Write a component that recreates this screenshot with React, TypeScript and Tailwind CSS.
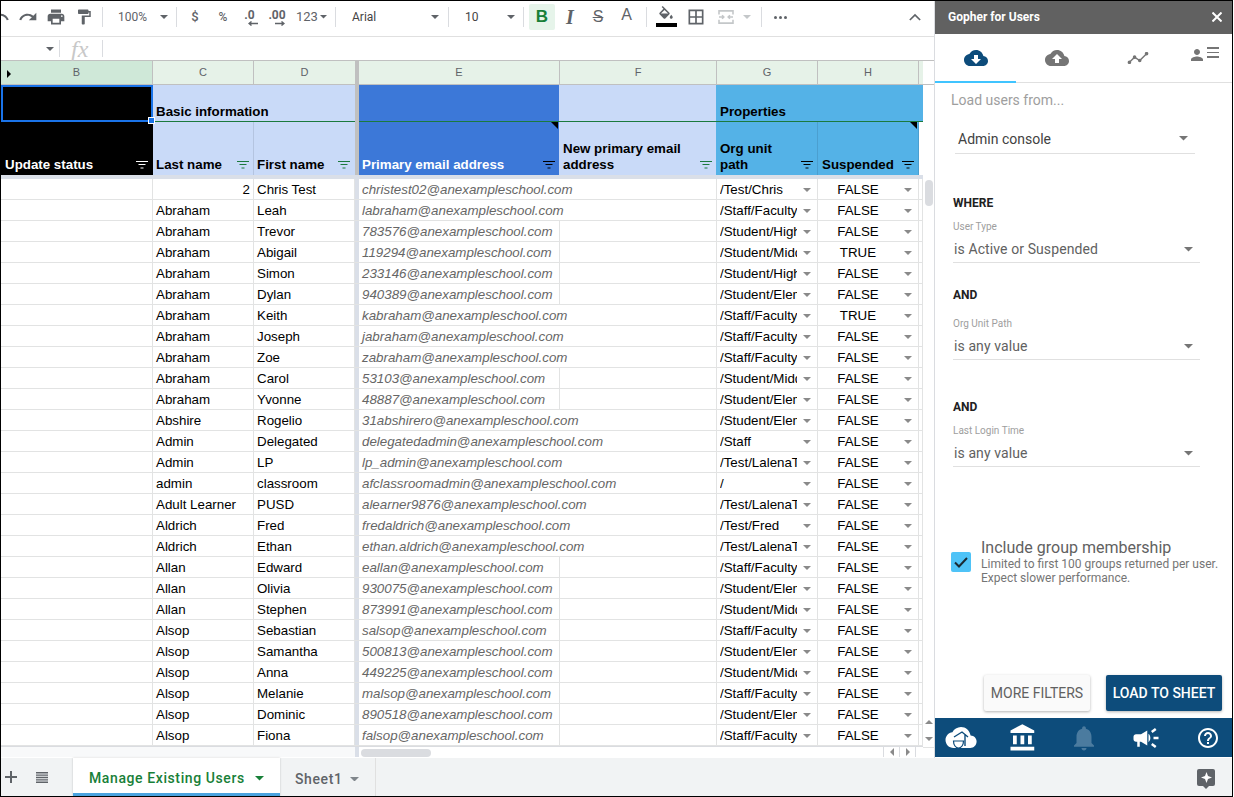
import React from "react";

type IP = { d: string; className?: string; size?: number };
const I = ({ d, className = "", size = 24 }: IP) => (
  <svg width={size} height={size} viewBox="0 0 24 24" fill="currentColor" className={className}>
    <path d={d} />
  </svg>
);

const P = {
  undo: "M12.5 8c-2.65 0-5.05.99-6.9 2.6L2 7v9h9l-3.62-3.62c1.39-1.16 3.16-1.88 5.12-1.88 3.54 0 6.55 2.31 7.6 5.5l2.37-.78C21.08 11.03 17.15 8 12.5 8z",
  redo: "M18.4 10.6C16.55 8.99 14.15 8 11.5 8c-4.65 0-8.58 3.03-9.96 7.22L3.9 16c1.05-3.19 4.05-5.5 7.6-5.5 1.95 0 3.73.72 5.12 1.88L13 16h9V7l-3.6 3.6z",
  print: "M19 8H5c-1.66 0-3 1.34-3 3v6h4v4h12v-4h4v-6c0-1.66-1.34-3-3-3zm-3 11H8v-5h8v5zm3-7c-.55 0-1-.45-1-1s.45-1 1-1 1 .45 1 1-.45 1-1 1zm-1-9H6v4h12V3z",
  paint: "M18 4V3c0-.55-.45-1-1-1H5c-.55 0-1 .45-1 1v4c0 .55.45 1 1 1h12c.55 0 1-.45 1-1V6h1v4H9v11c0 .55.45 1 1 1h2c.55 0 1-.45 1-1v-9h8V4h-3z",
  fill: "M16.56 8.94L7.62 0 6.21 1.41l2.38 2.38-5.15 5.15c-.59.59-.59 1.54 0 2.12l5.5 5.5c.29.29.68.44 1.06.44s.77-.15 1.06-.44l5.5-5.5c.59-.58.59-1.53 0-2.12zM5.21 10L10 5.21 14.79 10H5.21zM19 11.5s-2 2.17-2 3.5c0 1.1.9 2 2 2s2-.9 2-2c0-1.33-2-3.5-2-3.5z",
  borders: "M3 3v18h18V3H3zm8 16H5v-6h6v6zm0-8H5V5h6v6zm8 8h-6v-6h6v6zm0-8h-6V5h6v6z",
  down: "M19.35 10.04C18.67 6.59 15.64 4 12 4 9.11 4 6.6 5.64 5.35 8.04 2.34 8.36 0 10.91 0 14c0 3.31 2.69 6 6 6h13c2.76 0 5-2.24 5-5 0-2.64-2.05-4.78-4.65-4.96zM17 13l-5 5-5-5h3V9h4v4h3z",
  up: "M19.35 10.04C18.67 6.59 15.64 4 12 4 9.11 4 6.6 5.64 5.35 8.04 2.34 8.36 0 10.91 0 14c0 3.31 2.69 6 6 6h13c2.76 0 5-2.24 5-5 0-2.64-2.05-4.78-4.65-4.96zM14 13v4h-4v-4H7l5-5 5 5h-3z",
  person: "M12 12c2.21 0 4-1.79 4-4s-1.79-4-4-4-4 1.79-4 4 1.79 4 4 4zm0 2c-2.67 0-8 1.34-8 4v2h16v-2c0-2.66-5.33-4-8-4z",
  bank: "M4 10v7h3v-7H4zm6 0v7h3v-7h-3zM2 22h19v-3H2v3zm14-12v7h3v-7h-3zm-4.5-9L2 6v2h19V6l-9.5-5z",
  bell: "M12 22c1.1 0 2-.9 2-2h-4c0 1.1.89 2 2 2zm6-6v-5c0-3.07-1.64-5.64-4.5-6.32V4c0-.83-.67-1.5-1.5-1.5s-1.5.67-1.5 1.5v.68C7.63 5.36 6 7.92 6 11v5l-2 2v1h16v-1l-2-2z",
  horn: "M18 11v2h4v-2h-4zm-2 6.61c.96.71 2.21 1.65 3.2 2.39.4-.53.8-1.07 1.2-1.6-.99-.74-2.24-1.68-3.2-2.4-.4.54-.8 1.08-1.2 1.61zM20.4 5.6c-.4-.53-.8-1.07-1.2-1.6-.99.74-2.24 1.68-3.2 2.4.4.53.8 1.07 1.2 1.6.96-.72 2.21-1.65 3.2-2.4zM4 9c-1.1 0-2 .9-2 2v2c0 1.1.9 2 2 2h1v4h2v-4h1l5 3V6L8 9H4zm11.5 3c0-1.33-.58-2.53-1.5-3.35v6.69c.92-.81 1.5-2.01 1.5-3.34z",
  help: "M11 18h2v-2h-2v2zm1-16C6.48 2 2 6.48 2 12s4.48 10 10 10 10-4.48 10-10S17.52 2 12 2zm0 18c-4.41 0-8-3.59-8-8s3.59-8 8-8 8 3.59 8 8-3.59 8-8 8zm0-14c-2.21 0-4 1.79-4 4h2c0-1.1.9-2 2-2s2 .9 2 2c0 2-3 1.75-3 5h2c0-2.25 3-2.5 3-5 0-2.21-1.79-4-4-4z",
};

const Caret = ({ className = "text-[#5f6368]", w = 8 }: { className?: string; w?: number }) => (
  <svg width={w} height={w / 2} viewBox="0 0 10 5" className={className} fill="currentColor">
    <path d="M0 0h10L5 5z" />
  </svg>
);

const Divider = () => <div className="w-px h-[20px] bg-[#dadce0] shrink-0" />;

const Toolbar = () => (
  <div className="h-[36px] shrink-0 flex items-center pb-[3px] border-b border-[#e0e0e0] text-[#5f6368] font-['Roboto',sans-serif] overflow-hidden bg-white">
    <div className="w-[13px] shrink-0 flex justify-end overflow-hidden">
      <I d={P.undo} size={20} className="shrink-0 mr-[4px]" />
    </div>
    <div className="w-[28px] shrink-0 flex justify-center"><I d={P.redo} size={20} /></div>
    <div className="w-[28px] shrink-0 flex justify-center"><I d={P.print} size={20} /></div>
    <div className="w-[28px] shrink-0 flex justify-center"><I d={P.paint} size={18} /></div>
    <div className="w-[4px] shrink-0" />
    <Divider />
    <div className="w-[52px] shrink-0 pl-[15px] text-[12px]">100%</div>
    <div className="w-[18px] shrink-0 flex justify-center"><Caret /></div>
    <div className="w-[3px] shrink-0" />
    <Divider />
    <div className="w-[4px] shrink-0" />
    <div className="w-[28px] shrink-0 text-center text-[13px] font-medium">$</div>
    <div className="w-[28px] shrink-0 text-center text-[12px] font-medium">%</div>
    <div className="w-[25px] shrink-0 flex flex-col items-center mt-[1px]">
      <span className="text-[12px] font-bold leading-[12px]">.0</span>
      <svg width="10" height="5" viewBox="0 0 10 5" className="ml-[6px]"><path d="M10 2.5H2M3.5 0.5L1 2.5l2.5 2" stroke="currentColor" strokeWidth="1.4" fill="none" /></svg>
    </div>
    <div className="w-[30px] shrink-0 flex flex-col items-center mt-[1px]">
      <span className="text-[12px] font-bold leading-[12px]">.00</span>
      <svg width="10" height="5" viewBox="0 0 10 5" className="ml-[6px]"><path d="M0 2.5h8M6.5 0.5L9 2.5l-2.5 2" stroke="currentColor" strokeWidth="1.4" fill="none" /></svg>
    </div>
    <div className="w-[43px] shrink-0 pl-[4px] flex items-center gap-[2px] text-[13px]">
      <span>123</span><Caret w={7} />
    </div>
    <Divider />
    <div className="w-[94px] shrink-0 pl-[16px] text-[12px] text-[#444]">Arial</div>
    <div className="w-[10px] shrink-0 flex justify-center"><Caret /></div>
    <div className="w-[8px] shrink-0" />
    <Divider />
    <div className="w-[57px] shrink-0 pl-[16px] text-[12px] text-[#444]">10</div>
    <div className="w-[10px] shrink-0 flex justify-center"><Caret /></div>
    <div className="w-[7px] shrink-0" />
    <Divider />
    <div className="w-[5px] shrink-0" />
    <div className="w-[26px] h-[26px] shrink-0 flex items-center justify-center rounded-[2px] bg-[#e6f4ea] text-[#188038] font-['Liberation_Sans',sans-serif] font-bold text-[17px]">B</div>
    <div className="w-[1px] shrink-0" />
    <div className="w-[28px] shrink-0 text-center font-['Liberation_Serif',serif] italic font-bold text-[20px] leading-[20px]">I</div>
    <div className="w-[28px] shrink-0 text-center font-['Liberation_Sans',sans-serif] line-through text-[16px]">S</div>
    <div className="w-[28px] shrink-0 text-center pl-[1px] font-['Liberation_Sans',sans-serif] text-[16px] -mt-[4px]">A</div>
    <div className="w-[6px] shrink-0" />
    <Divider />
    <div className="w-[5px] shrink-0" />
    <div className="w-[28px] shrink-0 flex flex-col items-center -mt-[2px]">
      <I d={P.fill} size={18} className="-mb-[1px]" />
      <div className="w-[21px] h-[4px] bg-black" />
    </div>
    <div className="w-[2px] shrink-0" />
    <div className="w-[28px] shrink-0 flex justify-center"><I d={P.borders} size={20} /></div>
    <div className="w-[2px] shrink-0" />
    <div className="w-[28px] shrink-0 flex justify-center text-[#c4c7c9]">
      <svg width="16" height="14" viewBox="0 0 18 16" fill="none" stroke="currentColor" strokeWidth="1.8">
        <path d="M1 5V1h16v4M1 11v4h16v-4M1 8h5M17 8h-5M4.5 6 6.5 8l-2 2M13.5 6l-2 2 2 2" />
      </svg>
    </div>
    <div className="w-[14px] shrink-0 flex justify-center"><Caret className="text-[#c4c7c9]" /></div>
    <div className="w-[7px] shrink-0" />
    <Divider />
    <div className="w-[4px] shrink-0" />
    <div className="w-[28px] shrink-0 flex justify-center gap-[2px]">
      <span className="w-[3px] h-[3px] rounded-full bg-[#5f6368]" />
      <span className="w-[3px] h-[3px] rounded-full bg-[#5f6368]" />
      <span className="w-[3px] h-[3px] rounded-full bg-[#5f6368]" />
    </div>
    <div className="flex-1" />
    <div className="w-[20px] shrink-0 mr-[9px] flex justify-center">
      <svg width="12" height="8" viewBox="0 0 14 9" fill="none" stroke="currentColor" strokeWidth="2"><path d="M1 8l6-6 6 6" /></svg>
    </div>
  </div>
);

const FormulaBar = () => (
  <div className="h-[24px] shrink-0 flex items-center border-b border-[#c0c0c0] bg-white">
    <div className="w-[58px] shrink-0 flex justify-end pr-[5px]"><Caret className="text-[#5f6368]" w={8} /></div>
    <div className="w-px h-[17px] bg-[#dadce0]" />
    <div className="w-[42px] shrink-0 pl-[11px] font-['Liberation_Serif',serif] italic text-[24px] text-[#c8c8c8] leading-none">fx</div>
    <div className="w-px h-[17px] bg-[#dadce0]" />
  </div>
);

const Letter = ({ w, t, sel }: { w: string; t: string; sel?: boolean }) => (
  <div className={`${w} shrink-0 h-full flex items-center justify-center border-r border-[#c0c0c0] text-[11px] text-[#5f6368] font-['Liberation_Sans',sans-serif] ${sel ? "bg-[#cfe8d8] relative" : "bg-[#e6f2e8]"}`}>
    {sel && <span className="absolute left-[6px] top-[9px] w-0 h-0 border-y-[4px] border-y-transparent border-l-[4px] border-l-black" />}
    {t}
  </div>
);

const ColumnHeader = () => (
  <div className="h-[24px] shrink-0 flex border-b border-[#c0c0c0]">
    <Letter w="w-[152px]" t="B" sel />
    <Letter w="w-[101px]" t="C" />
    <div className="w-[101px] shrink-0 h-full flex items-center justify-center bg-[#e6f2e8] text-[11px] text-[#5f6368] font-['Liberation_Sans',sans-serif]">D</div>
    <div className="w-[4px] shrink-0 bg-[#c0c0c0]" />
    <Letter w="w-[201px]" t="E" />
    <Letter w="w-[157px]" t="F" />
    <Letter w="w-[101px]" t="G" />
    <Letter w="w-[101px]" t="H" />
    <div className="w-[4px] shrink-0 bg-[#e6f2e8]" />
  </div>
);

const Filter = ({ className }: { className: string }) => (
  <svg width="12" height="8" viewBox="0 0 12 8" className={`${className} shrink-0`} stroke="currentColor" strokeWidth="1" fill="none">
    <path d="M0 .5h12M2.5 3.5h7M4.5 7h3" />
  </svg>
);

const Corner = () => (
  <span className="absolute right-[1px] top-0 w-0 h-0 border-t-[7px] border-t-black border-l-[7px] border-l-transparent" />
);

const HeadCell = ({ w, bg, text, filter, border, corner, lines, pad = "pl-[3px]" }: { w: string; bg: string; text: string; filter: string; border: string; corner?: boolean; lines?: string[]; pad?: string }) => (
  <div className={`${w} ${bg} ${border} ${text} ${pad} shrink-0 relative border-r flex items-end pr-[4px] pb-[2px] font-bold text-[13.33px] leading-[16px]`}>
    {corner && <Corner />}
    <div className="flex-1 whitespace-nowrap">{lines?.map((l) => <div key={l}>{l}</div>)}</div>
    <Filter className={`${filter} mb-[4px]`} />
  </div>
);

const FrozenHeader = () => (
  <div className="shrink-0 font-['Liberation_Sans',sans-serif]">
    <div className="h-[37px] flex">
      <div className="w-[152px] shrink-0 bg-black border-2 border-[#1a73e8] relative">
        <span className="absolute -right-[4px] -bottom-[4px] w-[7px] h-[7px] bg-[#1a73e8] border border-white z-10" />
      </div>
      <div className="w-[202px] shrink-0 bg-[#c9daf8] border-b border-[#1b7a3e] flex items-end pl-[3px] pb-[1px] font-bold text-[13.33px] leading-[16px]">Basic information</div>
      <div className="w-[4px] shrink-0 bg-[#c0c0c0]" />
      <div className="w-[200px] shrink-0 bg-[#3c78d8] border-b border-[#1b7a3e]" />
      <div className="w-[157px] shrink-0 bg-[#c9daf8] border-b border-[#1b7a3e]" />
      <div className="w-[207px] shrink-0 bg-[#54b2e7] border-b border-[#1b7a3e] flex items-end pl-[4px] pb-[1px] font-bold text-[13.33px] leading-[16px]">Properties</div>
    </div>
    <div className="h-[53px] flex">
      <HeadCell w="w-[152px]" bg="bg-black" border="border-black" text="text-white" filter="text-white" pad="pl-[4px]" lines={["Update status"]} />
      <HeadCell w="w-[101px]" bg="bg-[#c9daf8]" border="border-[#b4c4e0]" text="text-black" filter="text-[#1b7a3e]" lines={["Last name"]} />
      <HeadCell w="w-[101px]" bg="bg-[#c9daf8]" border="border-[#c9daf8]" text="text-black" filter="text-[#1b7a3e]" lines={["First name"]} />
      <div className="w-[4px] shrink-0 bg-[#c0c0c0]" />
      <HeadCell w="w-[201px]" bg="bg-[#3c78d8]" border="border-[#c9daf8]" text="text-white" filter="text-black" corner lines={["Primary email address"]} />
      <HeadCell w="w-[157px]" bg="bg-[#c9daf8]" border="border-[#54b2e7]" text="text-black" filter="text-[#1b7a3e]" lines={["New primary email", "address"]} />
      <HeadCell w="w-[101px]" bg="bg-[#54b2e7]" border="border-[#4b9fd0]" text="text-black" filter="text-black" lines={["Org unit", "path"]} />
      <HeadCell w="w-[101px]" bg="bg-[#54b2e7]" border="border-[#4b9fd0]" text="text-black" filter="text-black" corner pad="pl-[4px]" lines={["Suspended"]} />
      <div className="w-[4px] shrink-0 bg-white" />
    </div>
    <div className="h-[4px] bg-[#dadfe8]" />
  </div>
);

type Row = [string, string, string, string, string?, boolean?];
const D = "@anexampleschool.com";
const rows: Row[] = [
  ["2", "Chris Test", "christest02", "/Test/Chris", "FALSE", true],
  ["Abraham", "Leah", "labraham", "/Staff/Faculty", "FALSE", true],
  ["Abraham", "Trevor", "783576", "/Student/High", "FALSE"],
  ["Abraham", "Abigail", "119294", "/Student/Middle", "TRUE"],
  ["Abraham", "Simon", "233146", "/Student/High", "FALSE"],
  ["Abraham", "Dylan", "940389", "/Student/Elem", "FALSE"],
  ["Abraham", "Keith", "kabraham", "/Staff/Faculty", "TRUE", true],
  ["Abraham", "Joseph", "jabraham", "/Staff/Faculty", "FALSE", true],
  ["Abraham", "Zoe", "zabraham", "/Staff/Faculty", "FALSE", true],
  ["Abraham", "Carol", "53103", "/Student/Middle", "FALSE"],
  ["Abraham", "Yvonne", "48887", "/Student/Elem", "FALSE"],
  ["Abshire", "Rogelio", "31abshirero", "/Student/Elem", "FALSE", true],
  ["Admin", "Delegated", "delegatedadmin", "/Staff", "FALSE", true],
  ["Admin", "LP", "lp_admin", "/Test/LalenaT", "FALSE", true],
  ["admin", "classroom", "afclassroomadmin", "/", "FALSE", true],
  ["Adult Learner", "PUSD", "alearner9876", "/Test/LalenaT", "FALSE", true],
  ["Aldrich", "Fred", "fredaldrich", "/Test/Fred", "FALSE", true],
  ["Aldrich", "Ethan", "ethan.aldrich", "/Test/LalenaT", "FALSE", true],
  ["Allan", "Edward", "eallan", "/Staff/Faculty", "FALSE"],
  ["Allan", "Olivia", "930075", "/Student/Elem", "FALSE"],
  ["Allan", "Stephen", "873991", "/Student/Middle", "FALSE"],
  ["Alsop", "Sebastian", "salsop", "/Staff/Faculty", "FALSE"],
  ["Alsop", "Samantha", "500813", "/Student/Elem", "FALSE"],
  ["Alsop", "Anna", "449225", "/Student/Middle", "FALSE"],
  ["Alsop", "Melanie", "malsop", "/Staff/Faculty", "FALSE"],
  ["Alsop", "Dominic", "890518", "/Student/Elem", "FALSE"],
  ["Alsop", "Fiona", "falsop", "/Staff/Faculty", "FALSE"],
];

const cell = "shrink-0 h-full pt-[2px] border-r border-[#e2e3e3] flex items-center whitespace-nowrap";

const DataRow = ({ r, i }: { r: Row; i: number }) => (
  <div className="h-[21px] flex border-b border-[#e2e3e3] text-[13.33px] text-black font-['Liberation_Sans',sans-serif]">
    <div className={`${cell} w-[152px]`} />
    <div className={`${cell} w-[101px] px-[3px] ${i === 0 ? "justify-end" : ""}`}>{r[0]}</div>
    <div className={`${cell} w-[101px] px-[3px]`}>{r[1]}</div>
    <div className="w-[4px] shrink-0 bg-[#dadfe8]" />
    <div className={`${cell} w-[201px] px-[3px] italic text-[#666666] ${r[5] ? "border-r-transparent" : ""}`}>{r[2] + D}</div>
    <div className={`${cell} w-[157px]`} />
    <div className={`${cell} w-[101px] pl-[3px]`}>
      <div className="w-[77px] overflow-hidden">{r[3]}</div>
      <Caret className="text-[#8a8a8a] ml-[6px]" w={8} />
    </div>
    <div className={`${cell} w-[101px]`}>
      <div className="w-[80px] text-center">{r[4]}</div>
      <Caret className="text-[#8a8a8a] ml-[6px]" w={8} />
    </div>
    <div className="w-[4px] shrink-0 border-r border-[#e2e3e3]" />
  </div>
);

const ScrollCol = () => (
  <div className="w-[11px] shrink-0 bg-white flex flex-col">
    <div className="h-[24px] bg-white border-b border-[#c0c0c0]" />
    <div className="flex-1 pt-[95px] pl-[2px]">
      <div className="w-[8px] h-[26px] rounded-[4px] bg-[#dadce0]" />
    </div>
    <div className="h-[17px] flex items-center justify-center"><Caret className="text-[#8a8a8a] rotate-180" w={8} /></div>
    <div className="h-[17px] flex items-center justify-center"><Caret className="text-[#8a8a8a]" w={8} /></div>
    <div className="h-[11px] border-t border-[#e2e3e3]" />
  </div>
);

const HScroll = () => (
  <div className="h-[11px] shrink-0 flex border-t border-[#dadce0] bg-white">
    <div className="w-[354px] shrink-0 bg-[#f8f9fa]" />
    <div className="w-[4px] shrink-0 bg-[#dadfe8]" />
    <div className="flex-1 pl-[2px] pt-[2px]">
      <div className="w-[70px] h-[8px] rounded-[4px] bg-[#dadce0]" />
    </div>
    <div className="w-[16px] border-l border-[#dadce0] flex items-center justify-center">
      <span className="w-0 h-0 border-y-[4px] border-y-transparent border-r-[4px] border-r-[#8a8a8a]" />
    </div>
    <div className="w-[16px] border-l border-[#dadce0] flex items-center justify-center">
      <span className="w-0 h-0 border-y-[4px] border-y-transparent border-l-[4px] border-l-[#8a8a8a]" />
    </div>
    <div className="w-[8px] border-l border-[#dadce0]" />
  </div>
);

const Select = ({ label, value, w, color }: { label?: string; value: string; w: string; color: string }) => (
  <div className={`${w}`}>
    {label && <div className="text-[10px] leading-[12px] text-[#9e9e9e]">{label}</div>}
    <div className={`mt-[4px] h-[26px] flex items-center justify-between border-b border-[#e0e0e0] text-[14px] tracking-[0.1px] ${color}`}>
      <span className="pl-[1px]">{value}</span>
      <Caret className="text-[#757575] mr-[7px]" w={9} />
    </div>
  </div>
);

const Panel = () => (
  <div className="w-[298px] shrink-0 flex flex-col border-l border-[#dadce0] bg-white font-['Roboto',sans-serif]">
    <div className="h-[33px] shrink-0 bg-[#616161] flex items-center justify-between pl-[13px] pr-[10px] pb-[2px] text-white">
      <span className="text-[12px] font-bold">Gopher for Users</span>
      <svg width="10" height="10" viewBox="0 0 10 10" stroke="currentColor" strokeWidth="2"><path d="M0.5 0.5l9 9M9.5 0.5l-9 9" /></svg>
    </div>
    <div className="h-[49px] shrink-0 flex border-b border-[#e0e0e0]">
      <div className="w-[81px] h-[49px] border-b-[2px] border-[#40c4ff] flex items-center justify-center text-[#0d4c7b]"><I d={P.down} size={24} /></div>
      <div className="w-[81px] flex items-center justify-center text-[#757575]"><I d={P.up} size={24} /></div>
      <div className="w-[81px] flex items-center justify-center text-[#757575]">
        <svg width="22" height="12" viewBox="0 0 24 14" fill="currentColor" stroke="currentColor" strokeWidth="1.6">
          <path d="M2 12l6-6 6 4 8-8" fill="none" />
          <circle cx="2" cy="12" r="1.3" /><circle cx="8" cy="6" r="1.3" /><circle cx="14" cy="10" r="1.3" /><circle cx="22" cy="2" r="1.3" />
        </svg>
      </div>
      <div className="flex-1 flex items-start justify-center pt-[12px] text-[#757575] gap-[1px] pr-[4px]">
        <I d={P.person} size={18} />
        <div className="flex flex-col gap-[3px] mt-[1px]">
          <span className="w-[12px] h-[1.5px] bg-[#757575]" />
          <span className="w-[12px] h-[1.5px] bg-[#757575]" />
          <span className="w-[12px] h-[1.5px] bg-[#757575]" />
        </div>
      </div>
    </div>
    <div className="flex-1 flex flex-col pl-[15px] pr-[8px]">
      <div className="pt-[8px] pl-[1px] text-[14px] leading-[18px] text-[#9e9e9e]">Load users from...</div>
      <div className="pl-[5px] pr-[29px] mt-[15px]">
        <div className="h-[30px] flex items-center justify-between border-b border-[#e0e0e0] text-[14px] text-[#424242]">
          <span className="pl-[3px] pt-[2px]">Admin console</span>
          <Caret className="text-[#757575] mr-[7px]" w={9} />
        </div>
      </div>
      <div className="mt-[42px] pl-[3px] text-[12px] leading-[14px] font-bold text-[#212121]">WHERE</div>
      <div className="mt-[11px] pl-[3px]"><Select label="User Type" value="is Active or Suspended" w="w-[247px]" color="text-[#616161]" /></div>
      <div className="mt-[25px] pl-[3px] text-[12px] leading-[14px] font-bold text-[#212121]">AND</div>
      <div className="mt-[16px] pl-[3px]"><Select label="Org Unit Path" value="is any value" w="w-[247px]" color="text-[#616161]" /></div>
      <div className="mt-[40px] pl-[3px] text-[12px] leading-[14px] font-bold text-[#212121]">AND</div>
      <div className="mt-[11px] pl-[3px]"><Select label="Last Login Time" value="is any value" w="w-[247px]" color="text-[#616161]" /></div>
      <div className="mt-[72px] flex items-center gap-[10px] pl-[1px]">
        <div className="w-[20px] h-[20px] shrink-0 rounded-[2px] bg-[#4fc3f7] flex items-center justify-center">
          <svg width="14" height="11" viewBox="0 0 14 11" fill="none" stroke="#1a2a33" strokeWidth="2"><path d="M1 5.5l4 4 8-8.5" /></svg>
        </div>
        <div className="text-[#757575]">
          <div className="text-[16px] leading-[18px] text-[#616161]">Include group membership</div>
          <div className="text-[12px] leading-[14px] whitespace-nowrap">Limited to first 100 groups returned per user.</div>
          <div className="text-[12px] leading-[14px]">Expect slower performance.</div>
        </div>
      </div>
      <div className="flex-1" />
      <div className="flex justify-end gap-[16px] pr-[2px] mb-[7px]">
        <div className="w-[106px] h-[36px] flex items-center justify-center rounded-[2px] bg-[#fafafa] text-[14px] text-[#616161] shadow-[0_1px_3px_rgba(0,0,0,0.3)]">MORE FILTERS</div>
        <div className="w-[116px] h-[36px] flex items-center justify-center rounded-[2px] bg-[#0d4c7b] text-[14px] font-medium text-white shadow-[0_1px_3px_rgba(0,0,0,0.3)]">LOAD TO SHEET</div>
      </div>
    </div>
    <div className="h-[39px] mb-[1px] shrink-0 bg-[#0d4c7b] flex items-center text-white overflow-hidden">
      <div className="w-[56px] shrink-0 flex justify-center pr-[4px]">
        <svg width="32" height="28" viewBox="0 0 32 28">
          <path fill="#fff" d="M25.6 11.5C24.6 6.4 20.7 3 16 3c-3.7 0-7 2.1-8.6 5.2C3.5 8.6.5 11.9.5 16c0 4.4 3.6 8 8 8h16.7c3.6 0 6.4-2.9 6.4-6.5 0-3.4-2.6-5.8-6-6z" />
          <path stroke="#0d4c7b" strokeWidth="1.4" fill="none" d="M9 13l8-5 6 5M20 10v12" />
          <path fill="#fff" stroke="#0d4c7b" strokeWidth="1.2" d="M8.5 17h10c0 4-2.2 7-5 7s-5-3-5-7z" />
          <circle cx="13.5" cy="14.5" r="1" fill="#fff" />
        </svg>
      </div>
      <div className="w-[62px] shrink-0 flex justify-center pl-[1px]"><I d={P.bank} size={30} /></div>
      <div className="w-[62px] shrink-0 flex justify-center text-[#4b7b9f]"><I d={P.bell} size={30} /></div>
      <div className="w-[62px] shrink-0 flex justify-center"><I d={P.horn} size={30} /></div>
      <div className="w-[62px] shrink-0 flex justify-center"><I d={P.help} size={24} /></div>
    </div>
  </div>
);

const Tabs = () => (
  <div className="h-[38px] shrink-0 bg-[#f1f3f4] flex items-center font-['Roboto',sans-serif] text-[#5f6368]">
    <div className="w-[20px] flex justify-center">
      <svg width="12" height="12" viewBox="0 0 12 12" fill="currentColor"><path d="M5 0h2v5h5v2H7v5H5V7H0V5h5z" /></svg>
    </div>
    <div className="w-[42px] flex justify-center">
      <svg width="12" height="11" viewBox="0 0 12 11" fill="currentColor"><path d="M0 0h12v1.4H0zM0 2.4h12v1.4H0zM0 4.8h12v1.4H0zM0 7.2h12v1.4H0zM0 9.6h12V11H0z" /></svg>
    </div>
    <div className="w-[10px]" />
    <div className="w-[207px] h-full bg-white border-b-[3px] border-[#4aa3df] flex items-center pl-[16px] pt-[6px] text-[#188038] text-[14px] font-medium tracking-[0.6px] shadow-[0_0_2px_rgba(0,0,0,0.2)]">
      <span>Manage Existing Users</span>
      <Caret className="text-[#188038] ml-[10px]" w={9} />
    </div>
    <div className="w-[96px] h-full flex items-center pl-[15px] pt-[4px] text-[14px] font-medium tracking-[0.6px] border-r border-[#e0e0e0]">
      <span>Sheet1</span>
      <Caret className="text-[#80868b] ml-[8px]" w={9} />
    </div>
    <div className="flex-1" />
    <div className="w-[18px] h-[20px] mr-[17px] mt-[3px] relative">
      <div className="w-[18px] h-[17px] rounded-[2px] bg-[#5f6368] flex items-center justify-center">
        <svg width="11" height="11" viewBox="0 0 11 11" fill="#fff"><path d="M5.5 0 7 4l4 1.5L7 7l-1.5 4L4 7 0 5.5 4 4z" /></svg>
      </div>
      <span className="absolute left-[6px] top-[17px] w-0 h-0 border-x-[3px] border-x-transparent border-t-[3px] border-t-[#5f6368]" />
    </div>
  </div>
);

export default function App() {
  return (
    <div className="w-[1233px] h-[797px] border border-black flex flex-col overflow-hidden bg-white">
      <div className="h-[757px] flex shrink-0">
        <div className="w-[933px] shrink-0 flex flex-col overflow-hidden">
          <Toolbar />
          <FormulaBar />
          <div className="flex-1 flex min-h-0">
            <div className="w-[922px] shrink-0 flex flex-col">
              <ColumnHeader />
              <FrozenHeader />
              {rows.map((r, i) => <DataRow key={i} r={r} i={i} />)}
              <HScroll />
            </div>
            <ScrollCol />
          </div>
        </div>
        <Panel />
      </div>
      <Tabs />
    </div>
  );
}
